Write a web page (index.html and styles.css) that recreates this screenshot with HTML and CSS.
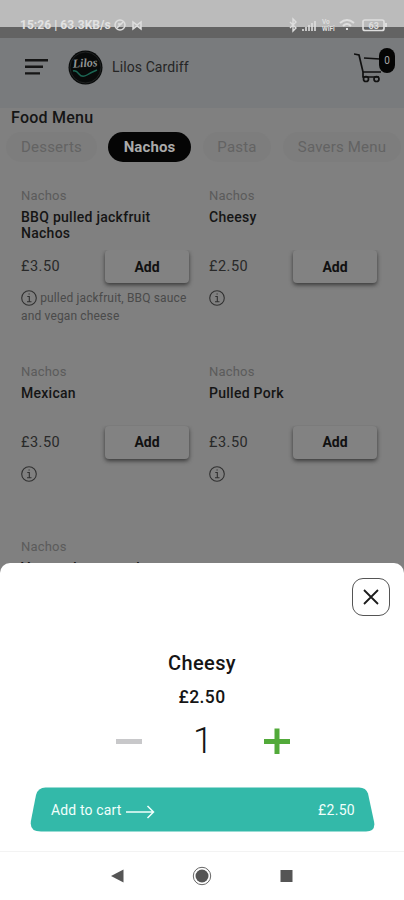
FILE: index.html
```html
<!DOCTYPE html>
<html lang="en">
<head>
<meta charset="utf-8">
<title>Lilos Cardiff</title>
<link rel="stylesheet" href="styles.css">
</head>
<body>
<div class="phone">
  <div class="status">
    <span class="status-time">15:26 | 63.3KB/s</span>
    <svg class="status-left" width="34" height="14" viewBox="0 0 34 14" fill="none" stroke="#dedede" stroke-width="1.5"><circle cx="7" cy="7" r="5"/><path d="M4 10L10 4M5 6h4M20 4v7l4-3 4 3V4l-4 3z"/></svg>
    <svg class="status-right" width="104" height="16" viewBox="0 0 104 16" fill="none" stroke="#dedede" stroke-width="1.4"><path d="M5 5l6 6-3 3V2l3 3-6 6"/><path d="M18 14v-2M21 14v-4M24 14V8M27 14V6M30 14V4" stroke-width="2" opacity=".8"/><path d="M55 6q7-6 14 0M58 9q4-4 8 0M61 12h2" stroke-width="2"/><rect x="78" y="3" width="21" height="10.500" rx="2" stroke-width="1.700"/><path d="M101 6v4" stroke-width="2"/><g fill="#dedede" stroke="none" class="tiny"><text x="37" y="7">Vo</text><text x="37" y="14">WiFi</text><text x="83.500" y="11.500" class="battery">63</text></g></svg>
  </div>
  <header class="header">
    <svg class="burger" width="24" height="18" viewBox="0 0 24 18" fill="none" stroke="#151515" stroke-width="2.400"><path d="M1 2.200h23M1 8.800h18M1 15.400h15"/></svg>
    <svg class="logo" width="35" height="35" viewBox="0 0 35 35"><circle cx="17.500" cy="17.500" r="17" fill="#080a0a"/><circle cx="17.500" cy="17.500" r="15.500" fill="none" stroke="#303333" stroke-width=".6"/><text x="5" y="17" transform="rotate(-4 17 17)">Lilos</text><path d="M5 21q3-1 6 3t8 1 10-5" fill="none" stroke="#1c6654" stroke-width="1.400"/></svg>
    <span class="brand">Lilos Cardiff</span>
    <div class="cart">
      <svg width="30" height="32" viewBox="0 0 30 32" fill="none" stroke="#111" stroke-width="1.700"><path d="M0 1l5 1 4 17h18M10 5l16 1M9 19v5h16"/><circle cx="12" cy="26" r="2.500"/><circle cx="22.500" cy="26" r="2.500"/></svg>
      <span class="count">0</span>
    </div>
  </header>
  <main>
    <h1>Food Menu</h1>
    <nav class="tabs"><span class="tab desserts">Desserts</span><span class="tab active">Nachos</span><span class="tab pasta">Pasta</span><span class="tab savers">Savers Menu</span></nav>
    <section class="grid">
      <article class="item">
        <p class="cat">Nachos</p><h2>BBQ pulled jackfruit Nachos</h2>
        <div class="buy"><span class="price">£3.50</span><button>Add</button></div>
        <p class="note"><svg class="info" viewBox="0 0 16 16"><circle cx="8" cy="8" r="7.300"/><path d="M6.300 6.500h2v5M6 11.800h4.500M7.500 4h1.200"/></svg> pulled jackfruit, BBQ sauce and vegan cheese</p>
      </article>
      <article class="item">
        <p class="cat">Nachos</p><h2>Cheesy</h2>
        <div class="buy"><span class="price">£2.50</span><button>Add</button></div>
        <p class="note"><svg class="info" viewBox="0 0 16 16"><circle cx="8" cy="8" r="7.300"/><path d="M6.300 6.500h2v5M6 11.800h4.500M7.500 4h1.200"/></svg></p>
      </article>
      <article class="item">
        <p class="cat">Nachos</p><h2>Mexican</h2>
        <div class="buy"><span class="price">£3.50</span><button>Add</button></div>
        <p class="note"><svg class="info" viewBox="0 0 16 16"><circle cx="8" cy="8" r="7.300"/><path d="M6.300 6.500h2v5M6 11.800h4.500M7.500 4h1.200"/></svg></p>
      </article>
      <article class="item">
        <p class="cat">Nachos</p><h2>Pulled Pork</h2>
        <div class="buy"><span class="price">£3.50</span><button>Add</button></div>
        <p class="note"><svg class="info" viewBox="0 0 16 16"><circle cx="8" cy="8" r="7.300"/><path d="M6.300 6.500h2v5M6 11.800h4.500M7.500 4h1.200"/></svg></p>
      </article>
      <article class="item"><p class="cat">Nachos</p><h2>Vegan cheese and</h2></article>
    </section>
  </main>
  <section class="sheet">
    <button class="close"><svg width="16" height="16" viewBox="0 0 16 16" stroke="#1c1c1c" stroke-width="1.800"><path d="M1 1l14 14M15 1L1 15"/></svg></button>
    <h3>Cheesy</h3>
    <p class="sheet-price">£2.50</p>
    <div class="stepper">
      <svg width="26" height="26" viewBox="0 0 26 26"><path d="M0 13.500h26" stroke="#c8c8ca" stroke-width="5"/></svg>
      <span class="qty">1</span>
      <svg width="26" height="26" viewBox="0 0 26 26"><path d="M0 13.500h26M13 .5v25.500" stroke="#52aa3a" stroke-width="5"/></svg>
    </div>
    <div class="add">
      <svg class="add-shape" width="346" height="45" viewBox="0 0 346 45"><path d="M15.500.5H329q7 0 9 6l6 28q2 10-8 10H11q-12 0-10-11L6 8Q8 .5 15.500.5z" fill="#33b9a9"/></svg>
      <span class="add-label">Add to cart</span>
      <svg class="arrow" width="29" height="14" viewBox="0 0 29 14" fill="none" stroke="#f1fffc" stroke-width="1.500"><path d="M0 7h27.500M21.500 1l6 6-6 6"/></svg>
      <span class="add-price">£2.50</span>
    </div>
    <div class="system">
      <svg width="184" height="20" viewBox="0 0 184 20" fill="#555"><path d="M1 10L13.500 3.500v13z"/><circle cx="92" cy="10" r="6.500"/><circle cx="92" cy="10" r="8.700" fill="none" stroke="#666" stroke-width="1"/><path d="M170.500 4h12v12h-12z"/></svg>
    </div>
  </section>
</div>
</body>
</html>
```
FILE: styles.css
```css
* { box-sizing: border-box; }
body { margin: 0; font-family: Roboto, sans-serif; }
h1, h2, h3, p { margin: 0; }
button { font: inherit; border: 0; padding: 0; }
.phone { position: relative; width: 404px; height: 900px; overflow: hidden; background: #808080; color: #151515; }
.status { display: flex; height: 38px; padding: 17px 15px 0 20px; background: linear-gradient(#bbb 27px, #636363 27px); color: #e2e2e2; }
.status-time { width: 91px; font-size: 12px; line-height: 16px; font-weight: 700; white-space: nowrap; letter-spacing: .05px; }
.status-left { margin: 1px 0 0 2px; }
.status-right { margin-left: auto; }
.tiny { font-size: 6.5px; font-weight: 700; }
.tiny .battery { font-size: 9px; }
.header { display: flex; align-items: center; height: 70px; padding: 0 8px 12px 24px; background: #797b7d; }
.burger { flex: none; }
.logo { margin-left: 20px; }
.logo text { font: italic 700 12px "Liberation Serif", serif; fill: #929494; }
.brand { margin-left: 9px; font-size: 14px; letter-spacing: .1px; color: #252525; }
.cart { position: relative; width: 42px; height: 36px; margin-left: auto; padding-top: 4px; }
.count { position: absolute; left: 25px; top: -1px; width: 16px; height: 25px; border-radius: 8px; background: #050505; color: #aaa; font-size: 10px; line-height: 25px; text-align: center; }
h1 { padding: 0 11px; font-size: 16px; line-height: 20px; font-weight: 500; letter-spacing: .25px; }
.tabs { display: flex; margin-top: 4px; padding-left: 6px; }
.tab { flex: none; height: 30px; border-radius: 15px; background: #7d7d7d; color: #636363; text-align: center; font-size: 15px; line-height: 30px; letter-spacing: .2px; }
.desserts { width: 91px; }
.active { width: 83px; margin-left: 11px; background: #050505; color: #aaa; font-weight: 700; letter-spacing: .1px; }
.pasta { width: 68px; margin-left: 12px; }
.savers { width: 118px; margin-left: 12px; }
.grid { display: grid; grid-template-columns: 168px 168px; grid-auto-rows: 175.5px; column-gap: 20px; padding: 25px 0 0 21px; }
.cat { font-size: 13px; line-height: 17px; letter-spacing: .2px; color: #5b5b5b; }
h2 { height: 37px; margin-top: 5px; font-size: 14px; line-height: 16px; font-weight: 500; letter-spacing: .27px; }
.buy { display: flex; align-items: center; justify-content: space-between; margin-top: 4px; height: 33px; }
.price { font-size: 14.5px; letter-spacing: .5px; color: #292929; }
.buy button { width: 84px; height: 33px; border-radius: 4px; background: #828282; color: #111; font-size: 14px; font-weight: 700; box-shadow: 0 2px 4px #393939; clip-path: inset(0 -5px -8px); }
.note { margin-top: 6px; font-size: 12px; line-height: 18px; letter-spacing: .15px; color: #4a4a4a; }
.info { width: 16px; height: 16px; vertical-align: -4px; fill: none; stroke: #303030; stroke-width: 1.1; }
.sheet { position: absolute; left: 0; right: 0; top: 563px; height: 337px; border-radius: 10px 10px 0 0; background: #fff; padding-top: 15px; }
.close { display: flex; align-items: center; justify-content: center; width: 38px; height: 38px; margin-left: 352px; border: 1px solid #555; border-radius: 11px; background: #fff; }
h3 { margin-top: 35px; text-align: center; font-size: 20px; line-height: 24px; font-weight: 500; letter-spacing: .4px; }
.sheet-price { margin-top: 12px; text-align: center; font-size: 17.5px; line-height: 20px; font-weight: 500; letter-spacing: .4px; }
.stepper { display: flex; align-items: center; justify-content: space-between; height: 40px; margin-top: 14px; padding: 0 114px 0 116px; }
.qty { font-size: 36px; line-height: 40px; font-weight: 300; }
.add { position: relative; display: flex; align-items: center; width: 346px; height: 45px; margin: 26px 0 0 30px; padding: 0 21px; color: #f1fffc; font-size: 14px; }
.add-shape { position: absolute; left: 0; top: 0; }
.add-label, .add-price, .arrow { position: relative; }
.add-label { letter-spacing: .15px; }
.arrow { margin: 5px 0 0 4px; }
.add-price { margin-left: auto; letter-spacing: .3px; }
.system { display: flex; align-items: center; justify-content: center; height: 48px; margin-top: 19px; border-top: 1px solid #f3f3f3; }
```
